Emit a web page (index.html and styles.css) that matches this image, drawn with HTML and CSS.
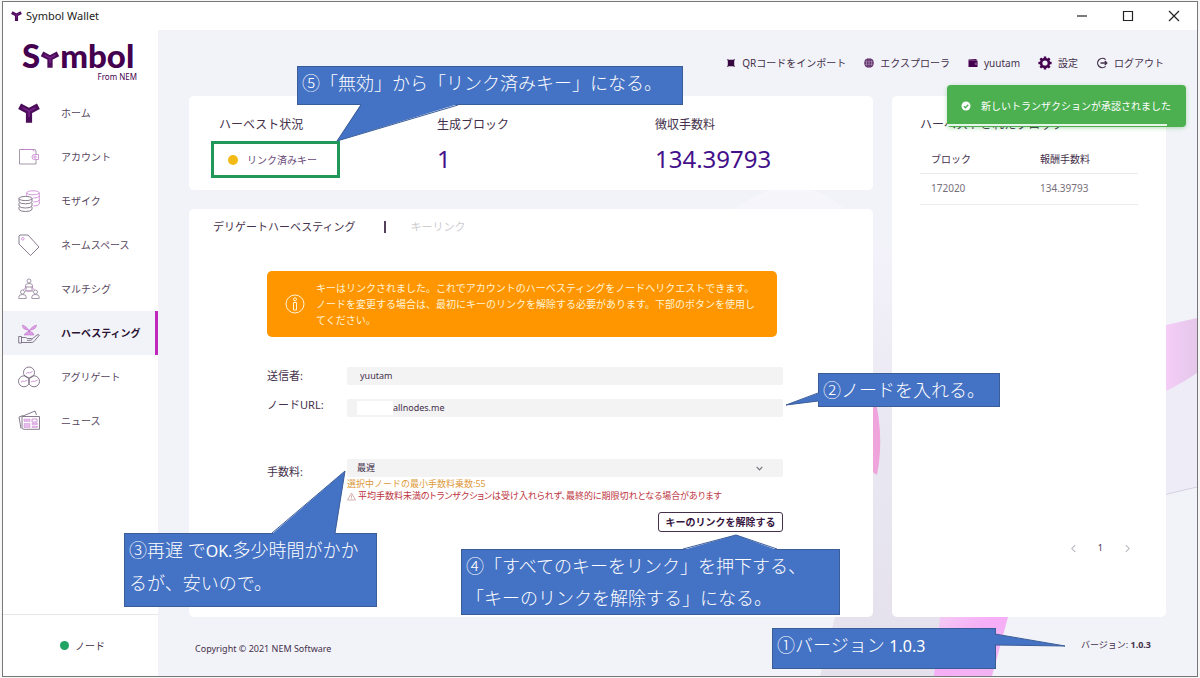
FILE: index.html
```html
<!DOCTYPE html>
<html lang="ja">
<head>
<meta charset="utf-8">
<title>Symbol Wallet</title>
<link rel="stylesheet" href="styles.css">
</head>
<body>
<svg class="defs" aria-hidden="true">
  <defs>
    <symbol id="mark" viewBox="0 0 22 20">
      <path d="M1.600 3.300 11 8.200 20.400 3.300M11 8.200V19.800" fill="none" stroke="#4b0d5a" stroke-width="6.200"/>
      <path d="M4.500 4.800 11 8.200 17.500 4.800M11 8.200V14" fill="none" stroke="#86269a" stroke-width="1.800" opacity=".7"/>
    </symbol>
  </defs>
</svg>
<div class="window">
  <header class="titlebar">
    <svg class="title-mark" aria-hidden="true"><use href="#mark"/></svg>
    <span class="title-text">Symbol Wallet</span>
    <div class="window-buttons">
      <button type="button" aria-label="最小化"><svg viewBox="0 0 12 12"><path d="M1 6h10"/></svg></button>
      <button type="button" aria-label="最大化"><svg viewBox="0 0 12 12"><path d="M1.500 1.500h9v9h-9z"/></svg></button>
      <button type="button" aria-label="閉じる"><svg viewBox="0 0 12 12"><path d="M1 1l10 10M11 1 1 11"/></svg></button>
    </div>
  </header>

  <div class="app">
    <aside class="sidebar">
      <div class="brand">
        <div class="wordmark">S<svg class="wordmark-y" aria-label="y"><use href="#mark"/></svg>mbol</div>
        <div class="brand-sub">From NEM</div>
      </div>
      <nav class="menu">
        <a href="#home"><svg viewBox="0 0 22 22"><use href="#mark" y="1" width="22" height="20"/></svg>ホーム</a>
        <a href="#account"><svg viewBox="0 0 22 22"><path class="g" d="M18 8.500V5Q18 3.500 16.500 3.500H1.500V18H18V13.500"/><path class="p" d="M3 3.500h11q2 0 2 2M16.500 8.500h4v5h-4a2.500 2.500 0 0 1 0-5z"/><circle class="p" cx="17" cy="11" r="1.200"/></svg>アカウント</a>
        <a href="#mosaic"><svg viewBox="0 0 22 22"><g class="p"><ellipse cx="15" cy="2.800" rx="6.300" ry="2"/><path d="M8.700 3v3M21.300 3v3q-1 2-6 2M21.300 6v4q-1 2-6 2M21.300 10v4q-1 2-6 2"/></g><g class="d"><ellipse cx="7.500" cy="8.500" rx="6.500" ry="2.100"/><path d="M1 8.500v3.300q1 2 6.500 2t6.500-2V8.500M1 13v3q1 2 6.500 2t6.500-2v-3M1 17v2.500q1 2 6.500 2t6.500-2V17"/></g></svg>モザイク</a>
        <a href="#namespace"><svg viewBox="0 0 22 22"><path class="d" d="M2 1h8l11 12-8.500 8.500L1 10V2z"/><circle class="p" cx="4.800" cy="4.800" r="1.300"/></svg>ネームスペース</a>
        <a href="#multisig"><svg viewBox="0 0 22 22"><g class="g"><circle cx="11" cy="3" r="2"/><path d="M7.500 9V7.500q0-2 3.500-2t3.500 2V9zM8 9v4M14 9v4M7 13h8"/><circle cx="4.500" cy="14" r="2"/><circle cx="17.500" cy="14" r="2"/><path d="M.8 20.500V19q0-2.500 3.700-2.500T8.200 19v1.500zM13.800 20.500V19q0-2.500 3.700-2.500t3.700 2.500v1.500z"/></g><path class="p" d="M13.500 8.500l3 3.500M8.500 8.500l-3 3.500M9 13h4"/></svg>マルチシグ</a>
        <a href="#harvesting" class="active" aria-current="page"><svg viewBox="0 0 22 22"><path class="pf" d="M11 10Q10 5 4.500 3 4 8 11 8zM11.500 10Q12 5 18.500 3 18 8 11.500 8zM6 13q2-3.500 5.500-3.500T16 13z"/><path class="d" d="M.7 14.500h2.800v6.500H.7zM3.500 15.500h4l2 1h4q1 1-.5 1.800H9M14 17l5-4q2-1 2.300.2L16 19.500q-1 1-3 1H3.500"/></svg>ハーベスティング</a>
        <a href="#aggregate"><svg viewBox="0 0 22 22"><g class="d"><circle cx="11" cy="6.500" r="5.500"/><circle cx="6" cy="15.300" r="5.500"/><circle cx="16" cy="15.300" r="5.500"/></g><path class="p" d="M8 7.500l2-1 1.500.5 3-1.500M3 16l2-1 1.500.5 3-1.500M13 16l2-1 1.500.5 3-1.500"/></svg>アグリゲート</a>
        <a href="#news"><svg viewBox="0 0 22 22"><path class="d" d="M5 6 17 1l1.500 4M3 18.500 1 7l4-1.500"/><path class="d" d="M4 6.500h17.500v12.800H6q-2 0-2-2z"/><path class="pf" d="M6 9h6v2.500H6zM6 13.500h6v4H6zM14 13h5.500v1.500H14zM14 16h5.500v1.500H14z" opacity=".7"/><path class="p" d="M14 9h5v3h-5z"/></svg>ニュース</a>
      </nav>
      <div class="node-status"><i class="dot dot-green"></i>ノード</div>
    </aside>

    <main class="main">
      <svg class="backdrop" viewBox="158 30 1039 646" preserveAspectRatio="xMaxYMax slice" aria-hidden="true">
        <defs>
          <linearGradient id="veil" x1="0" y1="0" x2="0" y2="1"><stop offset="0" stop-color="#f7f6fb"/><stop offset=".14" stop-color="#f3f2fa"/><stop offset=".5" stop-color="#e9e8f2"/><stop offset="1" stop-color="#e4e0ec"/></linearGradient>
          <linearGradient id="petal"><stop offset="0" stop-color="#f5cdf7"/><stop offset="1" stop-color="#e4c8ea"/></linearGradient>
          <linearGradient id="stem" x1="0" y1="0" x2="1" y2="1"><stop offset="0" stop-color="#f2cdf3"/><stop offset=".4" stop-color="#f7aef7"/><stop offset="1" stop-color="#f0b4f0"/></linearGradient>
        </defs>
        <path fill="url(#veil)" d="M735 209Q792 165 845 209L873 240 1000 340 1000 617 985 676H820L835 617 800 500z"/>
        <path fill="#f0a4dc" d="M870 380Q886 430 877 475L870 470z"/>
        <path fill="#eeedf7" d="M1100 330H1197V487L1100 509z"/>
        <path fill="none" stroke="#d5cfe2" d="M1100 510 1197 487"/>
        <path fill="url(#petal)" d="M1166 325 1197 318V373Q1184 382 1166 391z"/>
        <path fill="url(#stem)" d="M940 617h68q-8 30-16 59h-58z"/>
      </svg>

      <nav class="topnav">
        <a href="#qr"><svg class="i10" viewBox="0 0 10 10"><path d="M1 1l2 .8h4L9 1l-.8 2v4L9 9l-2-.8H3L1 9l.8-2V3z" fill="#35083f"/></svg>QRコードをインポート</a>
        <a href="#explorer"><svg class="i10" viewBox="0 0 10 10"><circle cx="5" cy="5" r="4.800" fill="#4b1457"/><path d="M0 3.300h10M0 6.700h10M5 0v10M0 5h10" stroke="#b9a3c0" stroke-width=".6"/><ellipse cx="5" cy="5" rx="2.600" ry="4.800" fill="none" stroke="#b9a3c0" stroke-width=".6"/></svg>エクスプローラ</a>
        <a href="#profile"><svg class="i10" viewBox="0 0 10 10"><path d="M.5 1.500 8.500 1v1.500h1V9H.5z" fill="#44004e"/><path d="M1 2.400h8M7 5h3v1.500H7z" stroke="#9a7aa3" stroke-width=".5" fill="#6d3a78"/></svg>yuutam</a>
        <a href="#settings"><svg class="i14" viewBox="0 0 14 14"><circle cx="7" cy="7" r="3.900" fill="none" stroke="#44004e" stroke-width="2.600"/><path d="M7 .4v2.200M7 11.400v2.200M.4 7h2.200M11.400 7h2.200M2.300 2.300l1.600 1.600M10.100 10.100l1.600 1.600M11.700 2.300l-1.600 1.600M3.900 10.100l-1.600 1.600" stroke="#44004e" stroke-width="2.400"/></svg>設定</a>
        <a href="#logout"><svg class="i12" viewBox="0 0 12 12"><path d="M9.600 2.600a4.700 4.700 0 1 0 0 6.800M4.500 6h6.300M8.800 4l2 2-2 2" fill="none" stroke="#44304b" stroke-width="1.300"/></svg>ログアウト</a>
      </nav>

      <div class="columns">
        <div class="left">
          <section class="card stats">
            <div><h2>ハーベスト状況</h2><p class="status"><i class="dot dot-yellow"></i>リンク済みキー</p></div>
            <div><h2>生成ブロック</h2><p class="figure">1</p></div>
            <div><h2>徴収手数料</h2><p class="figure">134.39793</p></div>
          </section>

          <section class="card harvest">
            <div class="tabs">
              <button type="button" class="tab">デリゲートハーベスティング</button>
              <i class="tab-rule"></i>
              <button type="button" class="tab tab-off">キーリンク</button>
            </div>
            <form class="form">
              <div class="alert">
                <svg viewBox="0 0 20 20" aria-hidden="true"><circle cx="10" cy="10" r="9"/><path d="M8.500 8.500h3V16h-3z"/><circle cx="10" cy="5.300" r="1.500"/></svg>
                <p>キーはリンクされました。これでアカウントのハーベスティングをノードへリクエストできます。ノードを変更する場合は、最初にキーのリンクを解除する必要があります。下部のボタンを使用してください。</p>
              </div>
              <div class="row">
                <label for="sender">送信者:</label>
                <input id="sender" class="field" type="text" value="yuutam" readonly>
              </div>
              <div class="row row-url">
                <label for="url">ノードURL:</label>
                <div class="masked"><input id="url" class="field field-url" type="text" value="allnodes.me"><i class="mask"></i></div>
              </div>
              <div class="row row-fee">
                <label for="fee">手数料:</label>
                <div>
                  <div class="select-box">
                    <select id="fee" class="field"><option>最遅</option></select>
                    <svg viewBox="0 0 8 8" aria-hidden="true"><path d="M1.500 2.500 4 5.300 6.500 2.500"/></svg>
                  </div>
                  <p class="hint">選択中ノードの最小手数料乗数:55</p>
                  <p class="warn"><svg viewBox="0 0 9 9" aria-hidden="true"><path d="M4.500 1 8.500 8H.5zM4.500 3.300v2.500M4.500 6.300v.8"/></svg>平均手数料未満のトランザクションは受け入れられず、最終的に期限切れとなる場合があります</p>
                </div>
              </div>
              <button type="button" class="unlink">キーのリンクを解除する</button>
            </form>
          </section>
        </div>

        <section class="card blocks">
          <h2>ハーベストされたブロック</h2>
          <table>
            <thead><tr><th>ブロック</th><th>報酬手数料</th></tr></thead>
            <tbody><tr><td>172020</td><td>134.39793</td></tr></tbody>
          </table>
          <div class="pager">
            <button type="button" aria-label="前へ"><svg viewBox="0 0 8 8"><path d="M5.500 1 2.500 4l3 3"/></svg></button>
            <span>1</span>
            <button type="button" aria-label="次へ"><svg viewBox="0 0 8 8"><path d="M2.500 1l3 3-3 3"/></svg></button>
          </div>
        </section>
      </div>

      <footer class="footer">
        <span class="copyright">Copyright © 2021 NEM Software</span>
        <span>バージョン: <b>1.0.3</b></span>
      </footer>
    </main>
  </div>

  <div class="toast" role="status">
    <svg viewBox="0 0 10 10" aria-hidden="true"><circle cx="5" cy="5" r="4.500" fill="#fff"/><path d="M2.800 5.100l1.600 1.600 2.900-3" fill="none" stroke="#4caf50" stroke-width="1.300"/></svg>
    新しいトランザクションが承認されました
  </div>

  <div class="callout c5"><svg class="tail"><polygon points="64,38 40,75 161,38"/><polyline points="64,39 40,75 161,39"/></svg>⑤「無効」から「リンク済みキー」になる。</div>
  <div class="callout c2"><svg class="tail"><polygon points="1,20 -32,32 1,28"/><polyline points="0,20 -32,32 0,28"/></svg>②ノードを入れる。</div>
  <div class="callout c3"><svg class="tail"><polygon points="148,1 221,-62 211,1"/><polyline points="148,0 221,-62 211,0"/></svg>③再遅 で<span class="latin">OK.</span>多少時間がかか<br>るが、安いので。</div>
  <div class="callout c4"><svg class="tail"><polygon points="222,1 275,-14 316,1"/><polyline points="222,0 275,-14 316,0"/></svg>④「すべてのキーをリンク」を押下する、<br>「キーのリンクを解除する」になる。</div>
  <div class="callout c1"><svg class="tail"><polygon points="222,6 293,18 222,17"/><polyline points="223,6 293,18 223,17"/></svg>①バージョン <span class="latin">1.0.3</span></div>
</div>
</body>
</html>
```

FILE: styles.css
```css
* { box-sizing: border-box; }

body {
  margin: 0;
  padding: 1px 2px;
  background: #f7f7f8;
  color: #44304b;
  font: 10px/16px "Noto Sans", "Noto Sans CJK JP", sans-serif;
}

h2, p { margin: 0; font-weight: 400; }
h2 { font-size: 12px; line-height: 18px; }
a { color: inherit; text-decoration: none; }
button { font: inherit; color: inherit; background: none; border: 0; padding: 0; }
.defs { position: absolute; width: 0; height: 0; }

.window {
  position: relative;
  display: flex;
  flex-direction: column;
  min-height: calc(100vh - 2px);
  border: 1px solid #77777a;
  background: #fff;
}

/* title bar */
.titlebar { display: flex; align-items: center; height: 28px; padding: 0 17px 0 8px; color: #222; }
.title-mark { width: 11px; height: 10px; margin-right: 4px; }
.title-text { font-size: 11px; }
.window-buttons { display: flex; gap: 34px; margin-left: auto; }
.window-buttons button { display: flex; }
.window-buttons svg { width: 12px; height: 12px; fill: none; stroke: #222; stroke-width: 1.2; }

.app { flex: 1; display: flex; }

/* sidebar */
.sidebar { display: flex; flex-direction: column; width: 155px; flex: none; background: #fff; }
.brand { height: 61px; padding: 9px 21px 0 19px; color: #44004e; }
.wordmark { display: flex; align-items: baseline; font: 900 33px/32px Lato, sans-serif; }
.wordmark-y { width: 20px; height: 17px; }
.brand-sub { margin-top: 1px; font-size: 8px; line-height: 10px; text-align: right; }
.menu { display: flex; flex-direction: column; }
.menu a { display: flex; align-items: center; gap: 21px; height: 44px; padding-left: 15px; border-right: 3px solid transparent; color: #57465e; }
.menu a.active { background: #f2f3f8; border-color: #c027bd; color: #2b1233; font-weight: 700; }
.menu svg { width: 22px; height: 22px; fill: none; stroke-width: .8; }
.g { stroke: #8d7f94; fill: none; }
.d { stroke: #6b5a73; fill: none; }
.p { stroke: #c77fd0; fill: none; }
.pf { fill: #dd9fe4; stroke: #b765c2; stroke-width: .5; }
.node-status { display: flex; align-items: center; gap: 6px; margin-top: auto; height: 62px; padding-left: 57px; border-top: 1px solid #e6e6ea; }
.dot { flex: none; border-radius: 50%; width: 9px; height: 9px; }
.dot-green { background: #1fa463; }
.dot-yellow { background: #f3ba15; width: 10px; height: 10px; }

/* main */
.main { position: relative; flex: 1; display: flex; flex-direction: column; padding: 0 31px; background: #f2f3f8; }
.backdrop { position: absolute; inset: 0; width: 100%; height: 100%; }
.topnav, .columns, .footer { position: relative; }
.topnav { display: flex; justify-content: flex-end; align-items: center; gap: 18px; height: 66px; padding-right: 2px; }
.topnav a { display: flex; align-items: center; gap: 6px; }
.i10 { width: 10px; height: 10px; }
.i12 { width: 12px; height: 12px; }
.i14 { width: 14px; height: 14px; }

.columns { flex: 1; display: grid; grid-template-columns: 1fr 274px; gap: 19px; }
.left { display: flex; flex-direction: column; gap: 19px; }
.card { background: #fff; border-radius: 5px; }

.stats { display: grid; grid-template-columns: repeat(3, 1fr); min-height: 94px; padding: 20px 0 12px 30px; }
.status { display: flex; align-items: center; gap: 9px; width: 129px; height: 37px; margin: 7px 0 0 -8px; padding-left: 14px; border: 3px solid #21975a; color: #6b4a7a; }
.figure { margin-top: 7px; font-size: 24px; line-height: 36px; color: #44108a; }

.harvest { flex: 1; padding: 8px 0 20px; }
.tabs { display: flex; align-items: center; height: 20px; padding-left: 24px; font-size: 11px; }
.tab-rule { width: 2px; height: 12px; margin: 0 25px 0 28px; background: #55405c; }
.tab-off { color: #cdcdd0; }
.form { display: flex; flex-direction: column; padding: 34px 90px 0 78px; }
.alert { display: flex; align-items: center; gap: 11px; min-height: 66px; margin: 0 6px 30px 0; padding: 8px 14px 8px 18px; border-radius: 5px; background: #ff9600; color: #fff3d8; }
.alert svg { flex: none; width: 20px; height: 20px; fill: none; stroke: #fff3d8; }
.row { display: grid; grid-template-columns: 80px 1fr; align-items: start; font-size: 11px; line-height: 18px; }
.row-url { margin-top: 14px; }
.row-url label { line-height: 12px; }
.row-fee { margin-top: 42px; }
.row-fee label { padding-top: 4px; }
.field { display: block; width: 100%; height: 18px; padding: 0 13px; border: 0; border-radius: 2px; background: #f3f3f4; color: #44304b; font: 9px/18px "Noto Sans", "Noto Sans CJK JP", sans-serif; }
.field-url { padding-left: 46px; }
.masked, .select-box { position: relative; }
.mask { position: absolute; left: 10px; top: 2px; width: 36px; height: 14px; background: #fff; }
select.field { appearance: none; padding-left: 10px; }
.select-box svg { position: absolute; right: 19px; top: 5px; width: 9px; height: 9px; fill: none; stroke: #77707a; }
.hint, .warn { font-size: 9px; line-height: 12px; white-space: nowrap; }
.hint { margin-top: 1px; color: #dd9a3c; }
.warn { display: flex; align-items: center; gap: 2px; color: #bd3340; font-feature-settings: "palt"; }
.warn svg { width: 9px; height: 9px; fill: none; stroke: #c99; stroke-width: .8; }
.unlink { align-self: flex-end; width: 125px; height: 20px; margin-top: 10px; border: 1px solid #44304b; border-radius: 3px; color: #35143d; font-weight: 700; }

.blocks { display: flex; flex-direction: column; padding: 20px 28px 60px; }
table { width: 100%; margin-top: 8px; border-collapse: collapse; table-layout: fixed; }
th, td { height: 31px; border-bottom: 1px solid #ebebee; text-align: left; font-weight: 400; }
th { padding: 4px 0 0 11px; }
td { padding: 0 0 2px 11px; color: #77707a; }
.pager { display: flex; justify-content: flex-end; align-items: center; gap: 20px; margin-top: auto; padding-right: 6px; font-size: 9px; line-height: 18px; }
.pager button { display: flex; }
.pager svg { width: 9px; height: 9px; fill: none; stroke: #b5b0b8; stroke-width: .9; }

.footer { display: flex; justify-content: space-between; height: 59px; padding: 20px 15px 0 6px; font-size: 9px; }
.copyright { padding-top: 4px; }

/* notification over the right column */
.toast { position: absolute; right: 11px; top: 83px; display: flex; align-items: center; gap: 10px; width: 239px; height: 42px; padding-left: 14px; border-radius: 4px; background: #4caf50; color: #fff; box-shadow: 0 1px 4px #4caf5066; }
.toast svg { width: 10px; height: 10px; }
.toast::after { content: ""; position: absolute; left: 0; right: 19px; bottom: 1px; height: 2px; background: #e6f5e7; }

/* annotations */
.callout { position: absolute; padding: 0 4px; border: 1px solid #3b5d97; background: #4472c4; color: #fff; font-size: 18px; line-height: 32px; font-weight: 300; white-space: nowrap; }
.latin { font-size: 16px; font-weight: 400; }
.tail { position: absolute; left: -1px; top: -1px; width: 1px; height: 1px; overflow: visible; }
.tail polygon { fill: #4472c4; }
.tail polyline { fill: none; stroke: #3b5d97; }
.c1 { left: 769px; top: 626px; width: 224px; height: 41px; }
.c2 { left: 815px; top: 371px; width: 182px; height: 34px; }
.c3 { left: 121px; top: 531px; width: 253px; height: 74px; }
.c4 { left: 458px; top: 547px; width: 379px; height: 66px; }
.c5 { left: 294px; top: 64px; width: 386px; height: 39px; }
```
